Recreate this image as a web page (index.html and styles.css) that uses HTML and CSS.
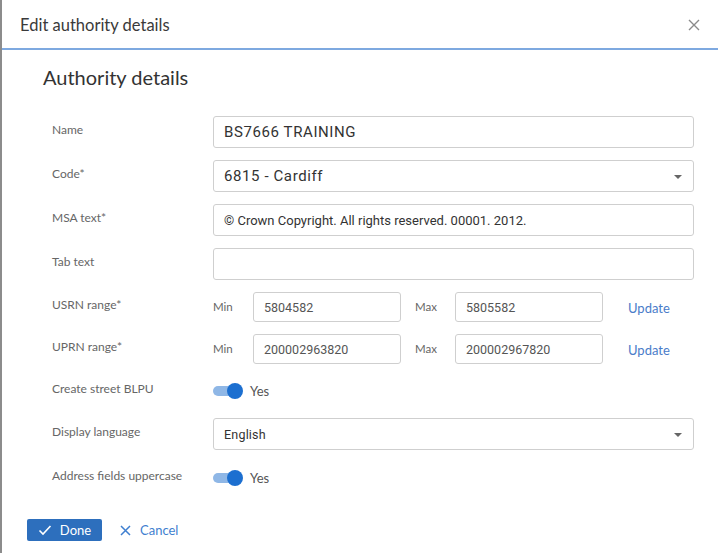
FILE: index.html
```html
<!DOCTYPE html>
<html>
<head>
<meta charset="utf-8">
<link rel="stylesheet" href="styles.css">
</head>
<body>
<div class="dialog">
  <div class="header">
    <span class="title">Edit authority details</span>
    <svg class="close" width="12" height="12" viewBox="0 0 12 12"><path d="M1 1L11 11M11 1L1 11" stroke="#8a8a8a" stroke-width="1.4" fill="none"/></svg>
  </div>
  <div class="content">
    <h2 class="section-title">Authority details</h2>
    <div class="form">
      <div class="row">
        <div class="label">Name</div>
        <div class="field"><div class="input large">BS7666 TRAINING</div></div>
      </div>
      <div class="row">
        <div class="label">Code*</div>
        <div class="field"><div class="input select large">6815 - Cardiff<span class="arrow"></span></div></div>
      </div>
      <div class="row">
        <div class="label">MSA text*</div>
        <div class="field"><div class="input">© Crown Copyright. All rights reserved. 00001. 2012.</div></div>
      </div>
      <div class="row">
        <div class="label">Tab text</div>
        <div class="field"><div class="input"></div></div>
      </div>
      <div class="row range">
        <div class="label">USRN range*</div>
        <div class="field">
          <span class="minmax">Min</span>
          <div class="input small">5804582</div>
          <span class="minmax max">Max</span>
          <div class="input small">5805582</div>
          <span class="update">Update</span>
        </div>
      </div>
      <div class="row range">
        <div class="label">UPRN range*</div>
        <div class="field">
          <span class="minmax">Min</span>
          <div class="input small">200002963820</div>
          <span class="minmax max">Max</span>
          <div class="input small">200002967820</div>
          <span class="update">Update</span>
        </div>
      </div>
      <div class="row toggle-row">
        <div class="label">Create street BLPU</div>
        <div class="field">
          <span class="switch"><span class="track"></span><span class="knob"></span></span>
          <span class="yes">Yes</span>
        </div>
      </div>
      <div class="row">
        <div class="label">Display language</div>
        <div class="field"><div class="input select lang">English<span class="arrow"></span></div></div>
      </div>
      <div class="row">
        <div class="label">Address fields uppercase</div>
        <div class="field">
          <span class="switch"><span class="track"></span><span class="knob"></span></span>
          <span class="yes">Yes</span>
        </div>
      </div>
    </div>
  </div>
  <div class="footer">
    <button class="btn-done">
      <svg width="14" height="12" viewBox="0 0 14 12"><path d="M1.5 6.5L5 10L12.5 2" stroke="#fff" stroke-width="1.6" fill="none"/></svg>
      Done
    </button>
    <button class="btn-cancel">
      <svg width="11" height="11" viewBox="0 0 11 11"><path d="M1 1L10 10M10 1L1 10" stroke="#3f7fd0" stroke-width="1.5" fill="none"/></svg>
      Cancel
    </button>
  </div>
</div>
</body>
</html>
```
FILE: styles.css
```css
html, body {
  margin: 0;
  padding: 0;
  background: #ffffff;
}
.dialog {
  width: 718px;
  height: 553px;
  box-sizing: border-box;
  border-left: 2px solid #8c8c8c;
  background: #fff;
  font-family: "Lato", "Open Sans", sans-serif;
  color: #333;
  overflow: hidden;
}
.header {
  height: 50px;
  box-sizing: border-box;
  border-bottom: 2px solid #7ea9e0;
  display: flex;
  align-items: center;
  justify-content: space-between;
  padding: 2px 18px 0 18px;
}
.title {
  font-size: 16.5px;
  color: #3a3a3a;
}
.close {
  display: block;
}
.content {
  padding: 15px 24px 0 41px;
}
.section-title {
  margin: 0;
  font-weight: normal;
  font-size: 20px;
  line-height: 24px;
  color: #333;
}
.form {
  margin-top: 27px;
  padding-left: 9px;
  display: flex;
  flex-direction: column;
  gap: 12px;
}
.row {
  display: flex;
  align-items: center;
  height: 32px;
}
.row.range,
.row.toggle-row {
  height: 30px;
}
.label {
  width: 161px;
  flex: none;
  font-size: 12px;
  color: #666;
  margin-top: -6px;
}
.field {
  flex: 1;
  display: flex;
  align-items: center;
  height: 100%;
}
.input {
  flex: 1;
  height: 100%;
  box-sizing: border-box;
  border: 1px solid #cfcfcf;
  border-radius: 3px;
  padding: 0 10px;
  display: flex;
  align-items: center;
  font-family: "Roboto", sans-serif;
  font-size: 13px;
  color: #333;
  position: relative;
}
.input.large {
  font-size: 15px;
  letter-spacing: 0.6px;
}
.input.lang {
  font-size: 12.5px;
  letter-spacing: 0.2px;
}
.select .arrow {
  position: absolute;
  right: 11px;
  top: 50%;
  margin-top: -1px;
  width: 0;
  height: 0;
  border-left: 4px solid transparent;
  border-right: 4px solid transparent;
  border-top: 4px solid #666;
}
.minmax {
  width: 40px;
  flex: none;
  font-size: 11.5px;
  color: #666;
  margin-top: -2px;
}
.minmax.max {
  width: 40px;
  margin-left: 14px;
}
.input.small {
  flex: none;
  width: 148px;
  font-size: 12.5px;
  color: #555;
}
.update {
  margin-left: 25px;
  font-size: 13px;
  color: #4a7cc9;
  margin-top: 2px;
}
.switch {
  position: relative;
  width: 30px;
  height: 16px;
  flex: none;
}
.track {
  position: absolute;
  left: 0;
  top: 3px;
  width: 26px;
  height: 10px;
  border-radius: 5px;
  background: #8fb7e6;
}
.knob {
  position: absolute;
  left: 14px;
  top: 0;
  width: 16px;
  height: 16px;
  border-radius: 50%;
  background: #1c6fd0;
}
.yes {
  margin-left: 7px;
  font-size: 13px;
  color: #555;
}
.footer {
  display: flex;
  align-items: center;
  padding: 25px 0 0 25px;
  gap: 8px;
}
.btn-done {
  height: 22px;
  width: 75px;
  border: none;
  border-radius: 2px;
  background: #2d6fbd;
  color: #fff;
  font-family: "Lato", sans-serif;
  font-size: 13px;
  display: flex;
  align-items: center;
  justify-content: center;
  gap: 8px;
  padding: 0;
}
.btn-cancel {
  border: none;
  background: none;
  color: #3f7fd0;
  font-family: "Lato", sans-serif;
  font-size: 13px;
  display: flex;
  align-items: center;
  gap: 9px;
  padding: 0 10px;
}
```
